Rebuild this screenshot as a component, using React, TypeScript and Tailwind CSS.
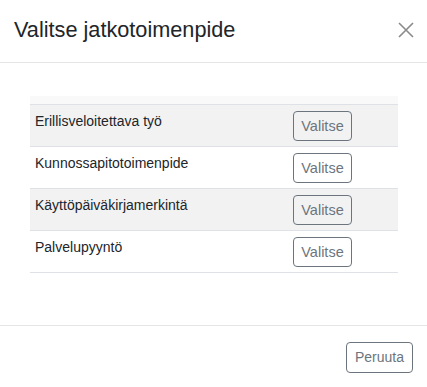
export default function App() {
  const rows = [
    "Erillisveloitettava työ",
    "Kunnossapitotoimenpide",
    "Käyttöpäiväkirjamerkintä",
    "Palvelupyyntö",
  ];

  return (
    <div
      className="flex h-[387px] w-[427px] flex-col bg-white text-[#212529]"
      style={{ fontFamily: '"Liberation Sans", Arial, sans-serif' }}
    >
      <div className="flex items-start justify-between border-b border-[#e5e5e5] pb-[17px] pl-[14px] pr-[13px] pt-[15px]">
        <h5 className="text-[21.7px] leading-[30px]">Valitse jatkotoimenpide</h5>
        <button className="mt-[7px] text-[#8a8a8a]">
          <svg width="16" height="16" viewBox="0 0 16 16" fill="none" stroke="currentColor" strokeWidth="1.6">
            <path d="M1 1 L15 15 M15 1 L1 15" />
          </svg>
        </button>
      </div>

      <div className="flex-1 pl-[30px] pr-[29px] pt-[33px]">
        <div className="h-[8px] bg-[#f9f9f9]" />
        {rows.map((label, i) => (
          <div
            key={label}
            className={
              "flex border-t border-[#dee2e6] text-[14px] leading-[20px] " +
              (i % 2 === 0 ? "bg-[#f2f2f2]" : "bg-white")
            }
          >
            <div className="flex-1 pb-[5px] pl-[5px] pt-[6px]">{label}</div>
            <div className="w-[110px] pb-[5px] pl-[5px] pt-[6px]">
              <button className="h-[30px] w-[59px] rounded-[4px] border border-[#6c757d] text-[14.5px] text-[#6c757d]">
                Valitse
              </button>
            </div>
          </div>
        ))}
        <div className="border-t border-[#dee2e6]" />
      </div>

      <div className="flex justify-end border-t border-[#e5e5e5] pb-[14px] pr-[14px] pt-[16px]">
        <button className="h-[31px] rounded-[4px] border border-[#6c757d] px-[8px] text-[14px] text-[#6c757d]">
          Peruuta
        </button>
      </div>
    </div>
  );
}
